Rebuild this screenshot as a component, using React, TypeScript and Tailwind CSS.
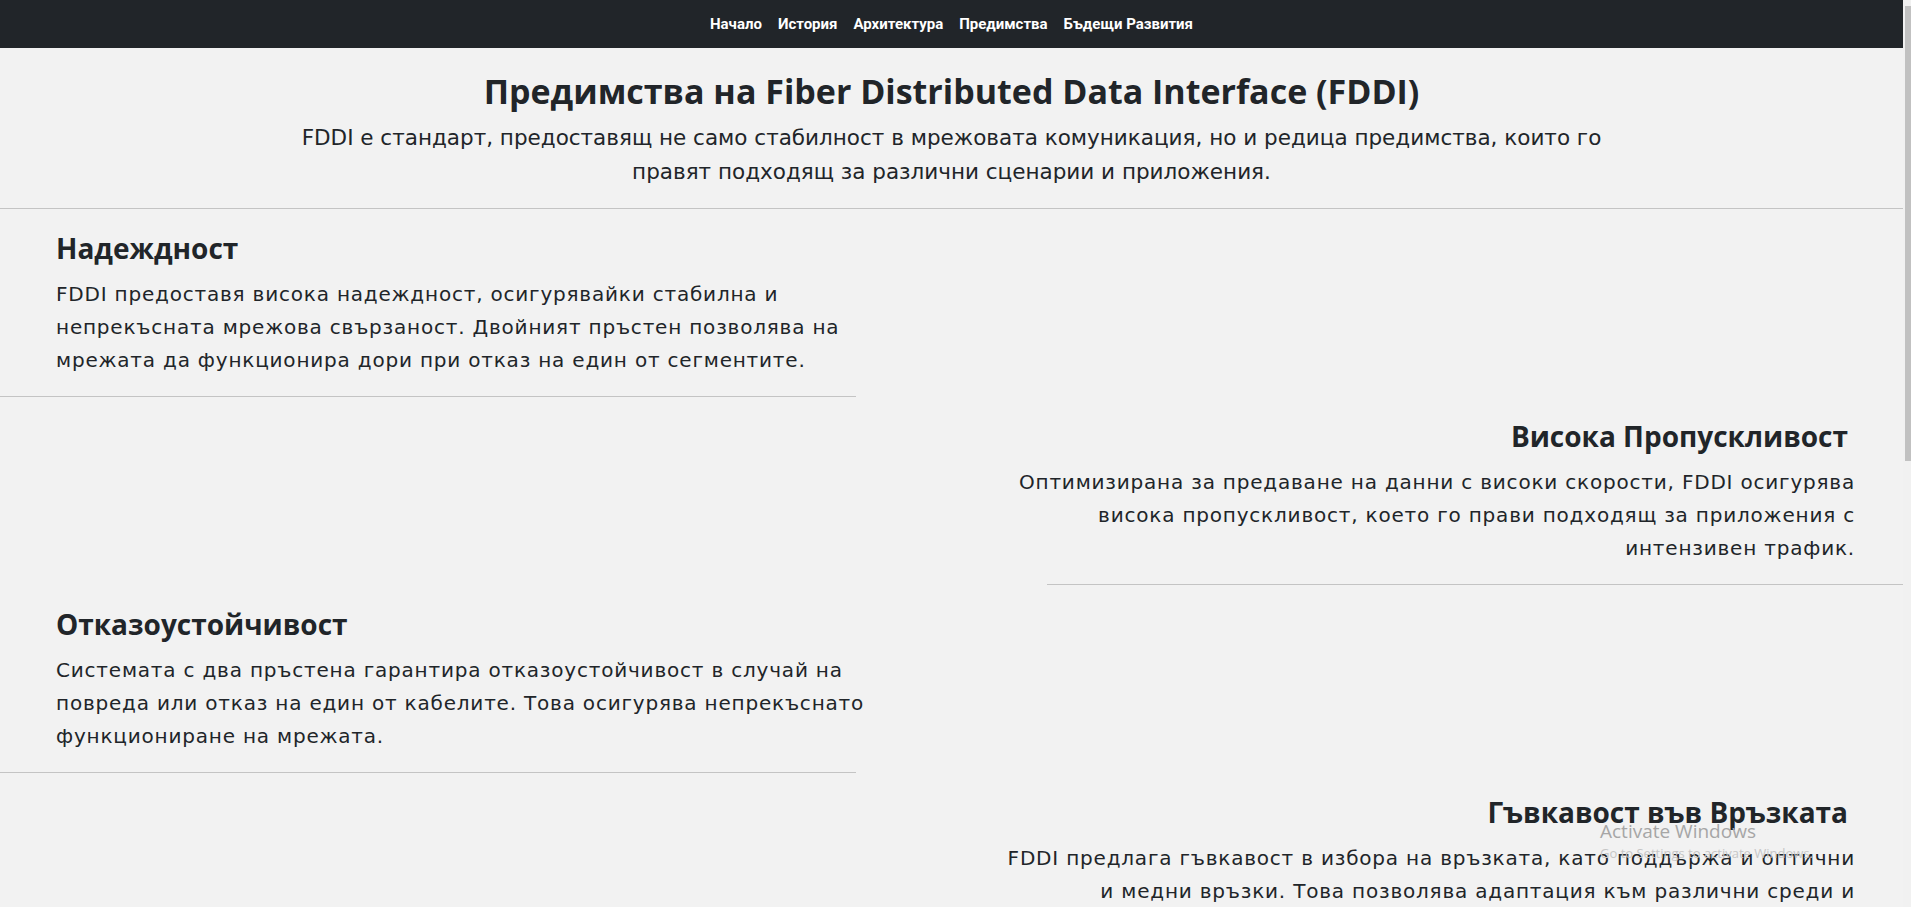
import React from "react";

const sections = [
  {
    title: "Надеждност",
    text: "FDDI предоставя висока надеждност, осигурявайки стабилна и непрекъсната мрежова свързаност. Двойният пръстен позволява на мрежата да функционира дори при отказ на един от сегментите.",
    right: false,
  },
  {
    title: "Висока Пропускливост",
    text: "Оптимизирана за предаване на данни с високи скорости, FDDI осигурява висока пропускливост, което го прави подходящ за приложения с интензивен трафик.",
    right: true,
  },
  {
    title: "Отказоустойчивост",
    text: "Системата с два пръстена гарантира отказоустойчивост в случай на повреда или отказ на един от кабелите. Това осигурява непрекъснато функциониране на мрежата.",
    right: false,
  },
  {
    title: "Гъвкавост във Връзката",
    text: "FDDI предлага гъвкавост в избора на връзката, като поддържа и оптични и медни връзки. Това позволява адаптация към различни среди и изисквания.",
    right: true,
  },
];

export default function App() {
  return (
    <div className="flex h-screen w-full overflow-hidden bg-[#f2f2f2]">
      <div className="relative flex-1 overflow-hidden">
        <nav className="flex h-[48px] items-center justify-center gap-[16px] bg-[#212529] font-['Roboto',sans-serif] text-[15px] font-bold text-white">
          <span>Начало</span>
          <span>История</span>
          <span>Архитектура</span>
          <span>Предимства</span>
          <span>Бъдещи Развития</span>
        </nav>

        <header className="border-b border-[#c4c4c4] pb-[19px] pt-[22px] text-center text-[#212529]">
          <h1 className="font-['Open_Sans',sans-serif] text-[34px] font-bold leading-[43px]">
            Предимства на Fiber Distributed Data Interface (FDDI)
          </h1>
          <p className="mx-auto mt-[8px] max-w-[1312px] font-['DejaVu_Sans',sans-serif] text-[21.5px] leading-[34px]">
            FDDI е стандарт, предоставящ не само стабилност в мрежовата комуникация, но и редица предимства, които го правят подходящ за различни сценарии и приложения.
          </p>
        </header>

        <main className="flex flex-col text-[#212529]">
          {sections.map((s) => (
            <section key={s.title} className={`flex flex-col ${s.right ? "items-end" : "items-start"}`}>
              <div
                className={`w-1/2 pb-[19px] pt-[22px] ${
                  s.right ? "pl-[36px] pr-[48px] text-right" : "pl-[56px] pr-[40px] text-left"
                }`}
              >
                <h2 className={`font-['Open_Sans',sans-serif] text-[28px] font-bold leading-[34px] ${s.right ? "pr-[7px]" : ""}`}>
                  {s.title}
                </h2>
                <p className="mt-[13px] font-['DejaVu_Sans',sans-serif] text-[20px] leading-[33px] tracking-[0.8px]">{s.text}</p>
              </div>
              <div className="h-px w-[45%] bg-[#c4c4c4]" />
            </section>
          ))}
        </main>

        <div className="pointer-events-none absolute left-[1600px] top-[820px] font-['Open_Sans',sans-serif] leading-[22px]">
          <div className="text-[19px] text-[#a6a6a6]">Activate Windows</div>
          <div className="text-[13px] text-[#c6c6c6]">Go to Settings to activate Windows.</div>
        </div>
      </div>

      <div className="flex w-[8px] flex-col bg-[#f1f1f1]">
        <div className="ml-[2px] mt-[6px] h-[455px] w-[6px] bg-[#c1c1c1]" />
      </div>
    </div>
  );
}
